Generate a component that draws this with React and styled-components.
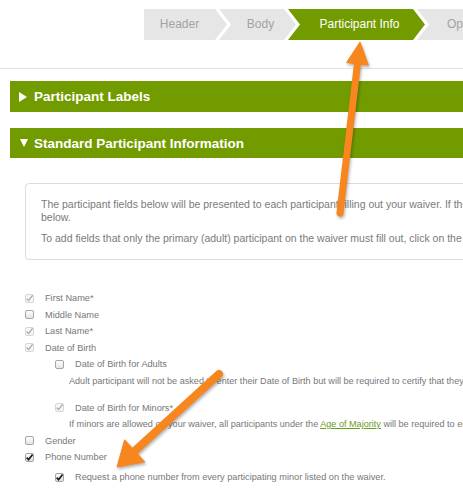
import React from 'react'
import styled, { createGlobalStyle } from 'styled-components'

const GlobalStyle = createGlobalStyle`
  html, body {
    margin: 0;
    padding: 0;
    background: #fff;
  }
  body {
    font-family: "Liberation Sans", Arial, sans-serif;
  }
`

const GREEN = '#729b00'
const ORANGE = '#f7861f'

const Page = styled.div`
  position: relative;
  width: 463px;
  height: 500px;
  overflow: hidden;
`

const StepBar = styled.div`
  box-sizing: border-box;
  height: 69px;
  padding: 9px 0 0 144px;
  display: flex;
  align-items: flex-start;
  border-bottom: 1px solid #e3e3e3;
`

const Step = styled.div`
  box-sizing: border-box;
  flex-shrink: 0;
  width: ${p => p.$w}px;
  height: 31px;
  line-height: 31px;
  margin-left: ${p => (p.$first ? 0 : -8)}px;
  padding: 0 12px 0 ${p => (p.$first ? 0 : p.$last ? 30 : 18)}px;
  text-align: ${p => (p.$last ? 'left' : 'center')};
  font-size: 12px;
  white-space: nowrap;
  overflow: hidden;
  color: ${p => (p.$active ? '#fff' : '#a3a3a3')};
  background: ${p => (p.$active ? GREEN : '#e6e6e6')};
  clip-path: ${p =>
    p.$first
      ? 'polygon(0 0, calc(100% - 12px) 0, 100% 50%, calc(100% - 12px) 100%, 0 100%)'
      : 'polygon(0 0, calc(100% - 12px) 0, 100% 50%, calc(100% - 12px) 100%, 0 100%, 12px 50%)'};
`

const Content = styled.div`
  min-width: 1000px;
  padding: 12px 0 0 10px;
`

const SectionBar = styled.div`
  display: flex;
  align-items: center;
  height: ${p => p.$h}px;
  margin-top: ${p => p.$mt || 0}px;
  padding-left: 9px;
  background: ${GREEN};
  color: #fff;
  font-weight: bold;
  font-size: 13.5px;
`

const Caret = styled.span`
  width: 0;
  height: 0;
  margin-right: 7px;
  border-style: solid;
  border-color: transparent;
  ${p =>
    p.$open
      ? `border-width: 8px 4.5px 0 4.5px; border-top-color: #fff; margin-left: 1px; margin-right: 6px;`
      : `border-width: 5px 0 5px 8.5px; border-left-color: #fff;`}
`

const Body = styled.div`
  padding-left: 15px;
  margin-top: 25px;
`

const InfoBox = styled.div`
  border: 1px solid #dcdcdc;
  border-radius: 4px;
  padding: 14px 15px;
  font-size: 10.5px;
  line-height: 13px;
  color: #7a7a7a;
  white-space: nowrap;

  p {
    margin: 0;
  }
  p + p {
    margin-top: 8px;
  }
`

const FieldList = styled.div`
  margin-top: 30px;
`

const Row = styled.div`
  display: flex;
  align-items: center;
  gap: 11px;
  height: 16.5px;
  margin-top: ${p => p.$mt || 0}px;
  padding-left: ${p => p.$indent || 0}px;
  font-size: 9.2px;
  color: #777;
  white-space: nowrap;
`

const Description = styled.div`
  height: 16.5px;
  line-height: 16.5px;
  padding-left: 44px;
  margin-bottom: ${p => p.$mb || 0}px;
  font-size: 9.1px;
  color: #777;
  white-space: nowrap;
`

const Link = styled.a`
  color: #6e9a25;
  text-decoration: underline;
`

const Box = styled.span`
  box-sizing: border-box;
  flex-shrink: 0;
  display: flex;
  align-items: center;
  justify-content: center;
  width: 9px;
  height: 9px;
  border: 1px solid ${p => (p.$disabled ? '#d6d6d6' : '#a5a5a5')};
  border-radius: 2px;
  background: ${p =>
    p.$disabled ? '#f7f7f7' : 'linear-gradient(#ffffff, #e4e4e4)'};

  svg {
    display: block;
    overflow: visible;
  }
`

const Checkbox = ({ checked, disabled }) => (
  <Box $disabled={disabled}>
    {checked && (
      <svg width="7" height="7" viewBox="0 0 7 7">
        <path
          d="M0.6 3.6 L2.6 5.6 L6.6 0.4"
          fill="none"
          stroke={disabled ? '#a8a8a8' : '#222'}
          strokeWidth={disabled ? 1.3 : 1.7}
        />
      </svg>
    )}
  </Box>
)

const Overlay = styled.svg`
  position: absolute;
  left: 0;
  top: 0;
  pointer-events: none;
  filter: drop-shadow(1px 2px 1.5px rgba(0, 0, 0, 0.3));
`

// shaft with a round tail, triangular head pointing at `to`
const Arrow = ({ from, to, shaft, headLen, headHalf }) => {
  const dx = from[0] - to[0]
  const dy = from[1] - to[1]
  const len = Math.hypot(dx, dy)
  const ux = dx / len
  const uy = dy / len
  const bx = to[0] + ux * headLen
  const by = to[1] + uy * headLen
  const px = -uy * headHalf
  const py = ux * headHalf
  const head = `${to[0]},${to[1]} ${bx + px},${by + py} ${bx - px},${by - py}`
  return (
    <g>
      <line
        x1={from[0]}
        y1={from[1]}
        x2={bx - ux * 2}
        y2={by - uy * 2}
        stroke={ORANGE}
        strokeWidth={shaft}
        strokeLinecap="round"
      />
      <polygon points={head} fill={ORANGE} strokeLinejoin="round" stroke={ORANGE} strokeWidth="1" />
    </g>
  )
}

export default function App() {
  return (
    <Page>
      <GlobalStyle />
      <StepBar>
        <Step $first $w={83}>Header</Step>
        <Step $w={77}>Body</Step>
        <Step $active $w={137}>Participant Info</Step>
        <Step $last $w={140}>Options</Step>
      </StepBar>

      <Content>
        <SectionBar $h={31}>
          <Caret />
          Participant Labels
        </SectionBar>
        <SectionBar $h={30} $mt={16}>
          <Caret $open />
          Standard Participant Information
        </SectionBar>

        <Body>
          <InfoBox>
            <p>
              The participant fields below will be presented to each participant filling out your waiver. If there are
              minors on the waiver, they will be asked for the fields listed
              <br />
              below.
            </p>
            <p>
              To add fields that only the primary (adult) participant on the waiver must fill out, click on the Primary
              Participant Information section.
            </p>
          </InfoBox>

          <FieldList>
            <Row>
              <Checkbox checked disabled />
              First Name*
            </Row>
            <Row>
              <Checkbox />
              Middle Name
            </Row>
            <Row>
              <Checkbox checked disabled />
              Last Name*
            </Row>
            <Row>
              <Checkbox checked disabled />
              Date of Birth
            </Row>
            <Row $indent={30}>
              <Checkbox />
              Date of Birth for Adults
            </Row>
            <Description $mb={10.5}>
              Adult participant will not be asked to enter their Date of Birth but will be required to certify that they
              are of legal age.
            </Description>
            <Row $indent={30}>
              <Checkbox checked disabled />
              Date of Birth for Minors*
            </Row>
            <Description>
              If minors are allowed on your waiver, all participants under the <Link>Age of Majority</Link> will be
              required to enter their Date of Birth.
            </Description>
            <Row>
              <Checkbox />
              Gender
            </Row>
            <Row>
              <Checkbox checked />
              Phone Number
            </Row>
            <Row $indent={30} $mt={3.5}>
              <Checkbox checked />
              Request a phone number from every participating minor listed on the waiver.
            </Row>
          </FieldList>
        </Body>
      </Content>

      <Overlay width="463" height="500" viewBox="0 0 463 500">
        <Arrow from={[340, 213]} to={[360, 42]} shaft={7} headLen={22} headHalf={11} />
        <Arrow from={[219, 374]} to={[117, 467]} shaft={8} headLen={24} headHalf={15} />
      </Overlay>
    </Page>
  )
}
